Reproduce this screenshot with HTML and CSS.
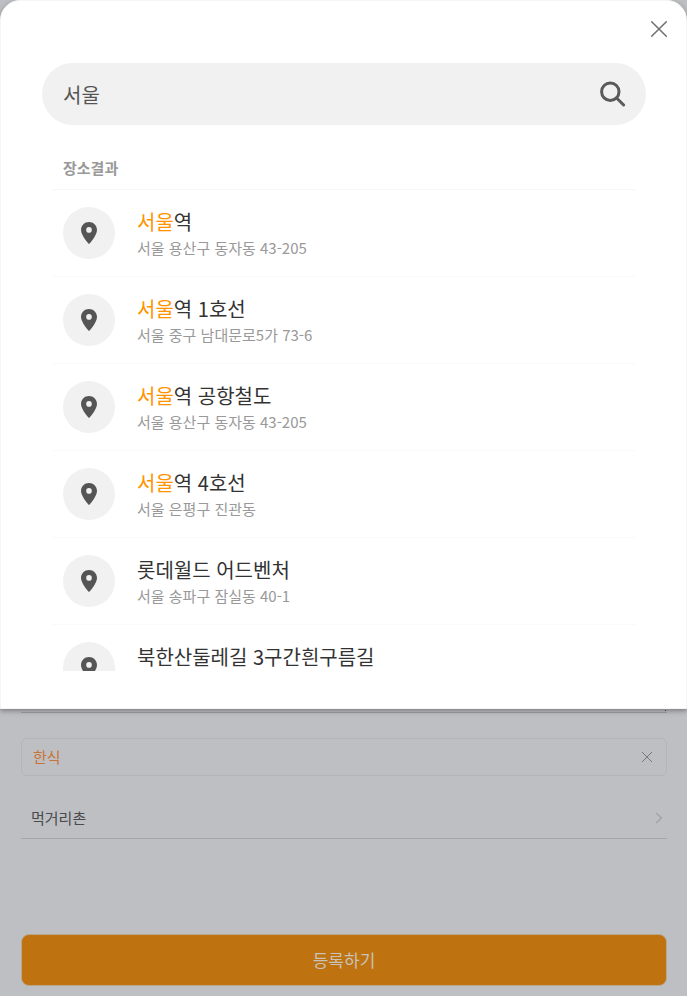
FILE: index.html
```
<!DOCTYPE html>
<html lang="ko">
<head>
<meta charset="utf-8">
<meta name="viewport" content="width=device-width, initial-scale=1">
<title>장소 검색</title>
<link rel="stylesheet" href="styles.css">
</head>
<body>
<svg class="defs" aria-hidden="true">
  <symbol id="pin" viewBox="0 0 16 22">
    <path fill="currentColor" fill-rule="evenodd" d="M8 0C3.600 0 0 3.500 0 7.900 0 13.600 8 22 8 22s8-8.400 8-14.100C16 3.500 12.400 0 8 0zm0 10.700a2.800 2.800 0 1 1 0-5.600 2.800 2.800 0 0 1 0 5.600z"/>
  </symbol>
</svg>

<section class="sheet" role="dialog" aria-label="장소 검색">
  <div class="sheet-bar">
    <button class="icon-button" type="button" aria-label="닫기">
      <svg width="18" height="18" viewBox="0 0 18 18" fill="none" stroke="#6f6f6f" stroke-width="1.500" stroke-linecap="round"><path d="M1.700 1.700l14.600 14.600M16.300 1.700l-14.600 14.600"/></svg>
    </button>
  </div>

  <form class="search" role="search">
    <input class="search-input" type="text" value="서울" aria-label="장소 검색어">
    <button class="icon-button" type="submit" aria-label="검색">
      <svg width="26" height="26" viewBox="0 0 26 26" fill="none" stroke="#5a5a5a" stroke-width="3"><circle cx="10.300" cy="10.700" r="8.700"/><path stroke-linecap="round" d="M16.600 17l7 7"/></svg>
    </button>
  </form>

  <div class="results">
    <h2 class="results-title">장소결과</h2>
    <ul class="places">
      <li class="place"><span class="place-icon"><svg width="16" height="22"><use href="#pin"/></svg></span><div class="place-text"><p class="place-name"><mark>서울</mark>역</p><p class="place-address">서울 용산구 동자동 43-205</p></div></li>
      <li class="place"><span class="place-icon"><svg width="16" height="22"><use href="#pin"/></svg></span><div class="place-text"><p class="place-name"><mark>서울</mark>역 1호선</p><p class="place-address">서울 중구 남대문로5가 73-6</p></div></li>
      <li class="place"><span class="place-icon"><svg width="16" height="22"><use href="#pin"/></svg></span><div class="place-text"><p class="place-name"><mark>서울</mark>역 공항철도</p><p class="place-address">서울 용산구 동자동 43-205</p></div></li>
      <li class="place"><span class="place-icon"><svg width="16" height="22"><use href="#pin"/></svg></span><div class="place-text"><p class="place-name"><mark>서울</mark>역 4호선</p><p class="place-address">서울 은평구 진관동</p></div></li>
      <li class="place"><span class="place-icon"><svg width="16" height="22"><use href="#pin"/></svg></span><div class="place-text"><p class="place-name">롯데월드 어드벤처</p><p class="place-address">서울 송파구 잠실동 40-1</p></div></li>
      <li class="place"><span class="place-icon"><svg width="16" height="22"><use href="#pin"/></svg></span><div class="place-text"><p class="place-name">북한산둘레길 3구간흰구름길</p></div></li>
    </ul>
  </div>
</section>

<main class="register">
  <div class="memo-edge"></div>
  <div class="tag">
    <span>한식</span>
    <button class="icon-button" type="button" aria-label="한식 삭제">
      <svg width="12" height="12" viewBox="0 0 12 12" fill="none" stroke="#77787b" stroke-width="1"><path d="M1 1l10 10M11 1L1 11"/></svg>
    </button>
  </div>
  <button class="category" type="button">
    <span>먹거리촌</span>
    <svg width="8" height="12" viewBox="0 0 8 12" fill="none" stroke="#a2a3a6" stroke-width="1.400"><path d="M1 1l5.500 5L1 11"/></svg>
  </button>
  <button class="submit" type="button">등록하기</button>
</main>
</body>
</html>
```
FILE: styles.css
```
* {
  box-sizing: border-box;
}

body {
  margin: 0;
  background: #bebfc3;
  color: #333;
  font-family: "Noto Sans CJK KR", sans-serif;
  font-size: 15px;
  line-height: 22px;
}

button,
input {
  border: 0;
  padding: 0;
  background: none;
  color: inherit;
  font: inherit;
}

h2,
p,
ul {
  margin: 0;
  padding: 0;
}

svg {
  display: block;
}

.defs {
  display: none;
}

.icon-button {
  display: flex;
  flex: none;
}

/* Search sheet */
.sheet {
  position: relative;
  padding: 0 40px 37px 41px;
  border: 1px solid #f5f5f6;
  border-radius: 20px 20px 0 0;
  background: #fff;
  box-shadow: 0 2px 5px rgba(0, 0, 0, 0.35);
}

.sheet-bar {
  display: flex;
  justify-content: flex-end;
  height: 62px;
  margin-right: -22px;
  padding-top: 19px;
}

.search {
  display: flex;
  align-items: center;
  height: 62px;
  padding: 0 20px 0 21px;
  border-radius: 31px;
  background: #f1f1f1;
}

.search-input {
  flex: 1;
  min-width: 0;
  padding-top: 2px;
  color: #555;
  font-size: 20px;
  line-height: 30px;
  outline: 0;
}

.results {
  margin: 0 10px;
}

.results-title {
  padding: 32px 11px 10px;
  border-bottom: 1px solid #f6f6f6;
  color: #999;
  font-size: 15px;
  font-weight: 700;
}

.places {
  max-height: 481px;
  overflow-y: auto;
  scrollbar-width: none;
  list-style: none;
}

.place {
  display: flex;
  gap: 22px;
  padding: 17px 11px;
  border-bottom: 1px solid #fafafa;
}

.place-icon {
  display: flex;
  flex: none;
  align-items: center;
  justify-content: center;
  width: 52px;
  height: 52px;
  border-radius: 50%;
  background: #f1f1f1;
  color: #555;
}

.place-name {
  color: #333;
  font-size: 20px;
  line-height: 30px;
}

.place-name mark {
  background: none;
  color: #ff9300;
}

.place-address {
  color: #999;
}

/* Registration form */
.register {
  padding: 0 20px 11px 21px;
}

.memo-edge {
  display: flex;
  justify-content: flex-end;
  height: 4px;
  padding: 1px 1px 0 0;
  border-bottom: 1px solid #9d9ea2;
}

.memo-edge::after {
  width: 1px;
  height: 1px;
  background: #444;
  content: "";
}

.tag {
  display: flex;
  align-items: center;
  justify-content: space-between;
  height: 38px;
  margin-top: 25px;
  padding: 0 13px 0 11px;
  border: 1px solid #b4b5b9;
  border-radius: 6px;
  color: #c77436;
}

.category {
  display: flex;
  align-items: center;
  justify-content: space-between;
  width: 100%;
  height: 43px;
  margin-top: 20px;
  padding: 2px 4px 0 10px;
  border-bottom: 1px solid #a5a6aa;
  color: #4b4b4d;
}

.submit {
  display: block;
  width: 100%;
  height: 52px;
  margin-top: 95px;
  margin-bottom: -1px;
  border: 1px solid #b9a78f;
  border-radius: 8px;
  background: #bf7210;
  color: #c9c2ba;
  font-size: 17px;
}
```
